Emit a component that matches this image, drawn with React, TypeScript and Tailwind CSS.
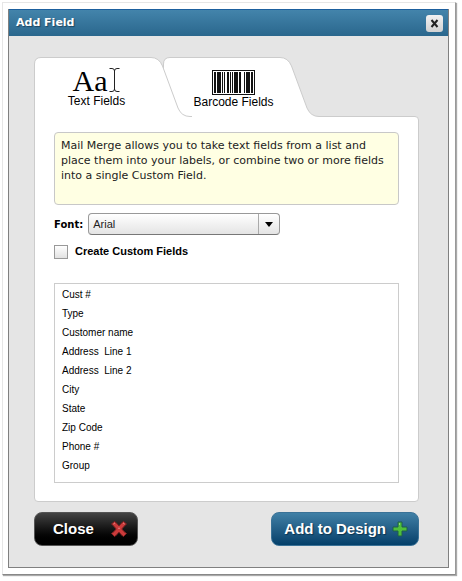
import React, { useState } from 'react';

const FIELDS = [
  'Cust #',
  'Type',
  'Customer name',
  'Address  Line 1',
  'Address  Line 2',
  'City',
  'State',
  'Zip Code',
  'Phone #',
  'Group'
];

// [x, width] of every dark bar
const BARS = [
  [2, 2], [5, 4], [10, 1], [12, 1], [15, 2], [18, 1], [20, 1], [22, 4],
  [27, 2], [32, 1], [34, 4], [39, 2]
];

const TabShape = () => (
  <svg
    className="absolute inset-0 h-full w-full"
    viewBox="0 0 158 60"
    preserveAspectRatio="none"
    aria-hidden="true"
  >
    <path
      d="M0.5 60 V7 Q0.5 0.5 7 0.5 H117 Q125 0.5 128.5 9 L144 51 Q147.5 59.5 156 59.5 H158 V60 Z"
      fill="#ffffff"
    />
    <path
      d="M0.5 60 V7 Q0.5 0.5 7 0.5 H117 Q125 0.5 128.5 9 L144 51 Q147.5 59.5 156 59.5 H158"
      fill="none"
      stroke="#cccccc"
    />
  </svg>
);

const CursorIcon = () => (
  <svg width="11" height="25" viewBox="0 0 11 25" fill="none" stroke="#222222" aria-hidden="true">
    <path d="M0.5 0.5 H3 Q5.5 0.5 5.5 3 Q5.5 0.5 8 0.5 H10.5 M5.5 3 V22 M0.5 23.5 H3 Q5.5 23.5 5.5 21 Q5.5 23.5 8 23.5 H10.5" />
  </svg>
);

const BarcodeIcon = () => (
  <svg width="43" height="25" viewBox="0 0 43 25" aria-hidden="true">
    <rect x="0.5" y="0.5" width="42" height="24" fill="#ffffff" stroke="#111111" />
    {BARS.map(([x, width]) => (
      <rect key={x} x={x} y="2" width={width} height="21" fill="#111111" />
    ))}
  </svg>
);

const CrossIcon = () => (
  <svg width="18" height="18" viewBox="0 0 18 18" aria-hidden="true">
    <path
      d="M4.5 1.5 Q7 3 9 6 Q11 3 13.5 1.5 L16.5 4 Q14 6 11.8 9 Q14 12 16.5 13.5 L13.5 16.5 Q11 15 9 12 Q7 15 4.5 16.5 L1.5 13.5 Q4 12 6.2 9 Q4 6 1.5 4 Z"
      fill="#cb3b3b"
      stroke="#7d2020"
    />
    <path d="M3.5 4 L5 3 M13 3 L14.5 4 M8 8 L9 8.5 L10 8" fill="none" stroke="#dd8080" />
  </svg>
);

const PlusIcon = () => (
  <svg width="16" height="16" viewBox="0 0 16 16" aria-hidden="true">
    <path
      d="M6 1 H10 V6 H15 V10 H10 V15 H6 V10 H1 V6 H6 Z"
      fill="#4fbf3a"
      stroke="#1f5f4a"
    />
    <path d="M7.5 2 V4" fill="none" stroke="#8fe07a" />
  </svg>
);

const App = () => {
  const [tab, setTab] = useState<string>('text');
  const [font, setFont] = useState<string>('Arial');
  const [custom, setCustom] = useState<boolean>(false);
  const [selected, setSelected] = useState<string | undefined>(undefined);

  return (
    <div className="flex min-h-screen bg-white pt-[2px] pr-[6px] pb-[6px] pl-[2px] font-['Liberation_Sans',Arial,sans-serif] text-black">
      <div className="flex grow border border-[#e6e6e6] border-r-[#999999] border-b-[#888888] pt-[6px] pr-[6px] pb-[6px] pl-[5px] shadow-[1px_1px_1px_#aaaaaa]">
        <section
          aria-labelledby="dialog-title"
          className="flex grow flex-col border border-t-0 border-[#808080] bg-[#e5e5e5]"
        >
          <header className="flex h-[27px] items-center justify-between border-t border-[#1c5f9e] bg-linear-to-b from-[#4384ab] to-[#2a678d] pr-[5px] pl-[7px]">
            <h1
              id="dialog-title"
              className="font-['DejaVu_Sans',Verdana,sans-serif] text-[11px] font-bold text-white [text-shadow:1px_1px_1px_#1d4660]"
            >
              Add Field
            </h1>
            <button
              type="button"
              aria-label="Close dialog"
              className="flex h-[17px] w-[17px] items-center justify-center rounded-[3px] bg-linear-to-b from-[#f2f2f2] to-[#d2d2d2]"
            >
              <svg width="9" height="9" viewBox="0 0 9 9" fill="none" stroke="#222222" strokeWidth="2" aria-hidden="true">
                <path d="M1.5 1 L7.5 8 M7.5 1 L1.5 8" />
              </svg>
            </button>
          </header>

          <div className="flex grow flex-col pt-[21px] pr-[29px] pb-[21px] pl-[25px]">
            <div role="tablist" className="relative z-10 -mb-px flex">
              <button
                type="button"
                role="tab"
                aria-selected={tab === 'text'}
                onClick={() => setTab('text')}
                className="relative z-10 h-[60px] w-[158px]"
              >
                <TabShape />
                <span className="relative flex h-full flex-col items-center pt-[10px] pr-[33px]">
                  <span className="flex h-[27px] items-center gap-[2px]">
                    <span className="font-['Liberation_Serif','Times_New_Roman',serif] text-[30px] leading-[26px]">
                      Aa
                    </span>
                    <CursorIcon />
                  </span>
                  <span className="text-[12px] leading-[14px]">Text Fields</span>
                </span>
              </button>
              <button
                type="button"
                role="tab"
                aria-selected={tab === 'barcode'}
                onClick={() => setTab('barcode')}
                className="relative -ml-[29px] h-[60px] w-[158px]"
              >
                <TabShape />
                <span className="relative flex h-full flex-col items-center pt-[13px] pr-[17px]">
                  <BarcodeIcon />
                  <span className="text-[12px] leading-[14px]">Barcode Fields</span>
                </span>
              </button>
            </div>

            <div
              role="tabpanel"
              className="flex grow flex-col rounded-tr-[4px] rounded-b-[4px] border border-[#cccccc] bg-white px-[19px] pt-[15px] pb-[18px]"
            >
              <p className="h-[73px] rounded-[4px] border border-[#c8c8c8] bg-[#ffffe3] px-[6px] pt-[5px] font-['DejaVu_Sans',Verdana,sans-serif] text-[11px] leading-[15px] text-[#222222]">
                Mail Merge allows you to take text fields from a list and place
                them into your labels, or combine two or more fields into a
                single Custom Field.
              </p>

              <div className="mt-[8px] flex items-center gap-[5px]">
                <label
                  htmlFor="font"
                  className="font-['DejaVu_Sans',Verdana,sans-serif] text-[10px] font-bold"
                >
                  Font:
                </label>
                <div className="relative flex">
                  <select
                    id="font"
                    value={font}
                    onChange={(e) => setFont(e.target.value)}
                    className="h-[22px] w-[192px] appearance-none rounded-[4px] border border-[#999999] border-b-[#777777] bg-linear-to-b from-white to-[#e4e4e4] pl-[4px] text-[11px] text-[#222222]"
                  >
                    <option>Arial</option>
                    <option>Times New Roman</option>
                    <option>Verdana</option>
                  </select>
                  <span className="pointer-events-none absolute inset-y-px right-px flex w-[21px] items-center justify-center border-l border-[#aaaaaa]">
                    <svg width="8" height="5" viewBox="0 0 8 5" aria-hidden="true">
                      <path d="M0 0 H8 L4 5 Z" fill="#000000" />
                    </svg>
                  </span>
                </div>
              </div>

              <label className="mt-[9px] flex items-center gap-[7px] text-[11px] leading-[15px] font-bold">
                <input
                  type="checkbox"
                  checked={custom}
                  onChange={(e) => setCustom(e.target.checked)}
                  className="h-[14px] w-[14px] appearance-none border border-[#999999] bg-linear-to-b from-white to-[#e2e2e2] checked:bg-[#4384ab]"
                />
                Create Custom Fields
              </label>

              <ul
                role="listbox"
                aria-label="Fields"
                className="mt-[24px] grow border border-[#cccccc] pt-px text-[10px] leading-[19px]"
              >
                {FIELDS.map((field) => (
                  <li
                    key={field}
                    role="option"
                    aria-selected={selected === field}
                    onClick={() => setSelected(field)}
                    className="px-[7px] whitespace-pre aria-selected:bg-[#cfe3f0]"
                  >
                    {field}
                  </li>
                ))}
              </ul>
            </div>

            <footer className="mt-[10px] flex justify-between text-[15px] font-bold text-white">
              <button
                type="button"
                className="flex h-[34px] items-center gap-[16px] rounded-[8px] border border-[#555555] bg-linear-to-b from-[#444444] to-black pr-[9px] pl-[18px] [text-shadow:1px_1px_1px_#000000]"
              >
                Close
                <CrossIcon />
              </button>
              <button
                type="button"
                className="flex h-[34px] items-center gap-[6px] rounded-[8px] border border-[#3a7297] bg-linear-to-b from-[#4080a6] to-[#04406a] pr-[10px] pl-[12px] [text-shadow:1px_1px_1px_#0b3450]"
              >
                Add to Design
                <PlusIcon />
              </button>
            </footer>
          </div>
        </section>
      </div>
    </div>
  );
};

export default App;
